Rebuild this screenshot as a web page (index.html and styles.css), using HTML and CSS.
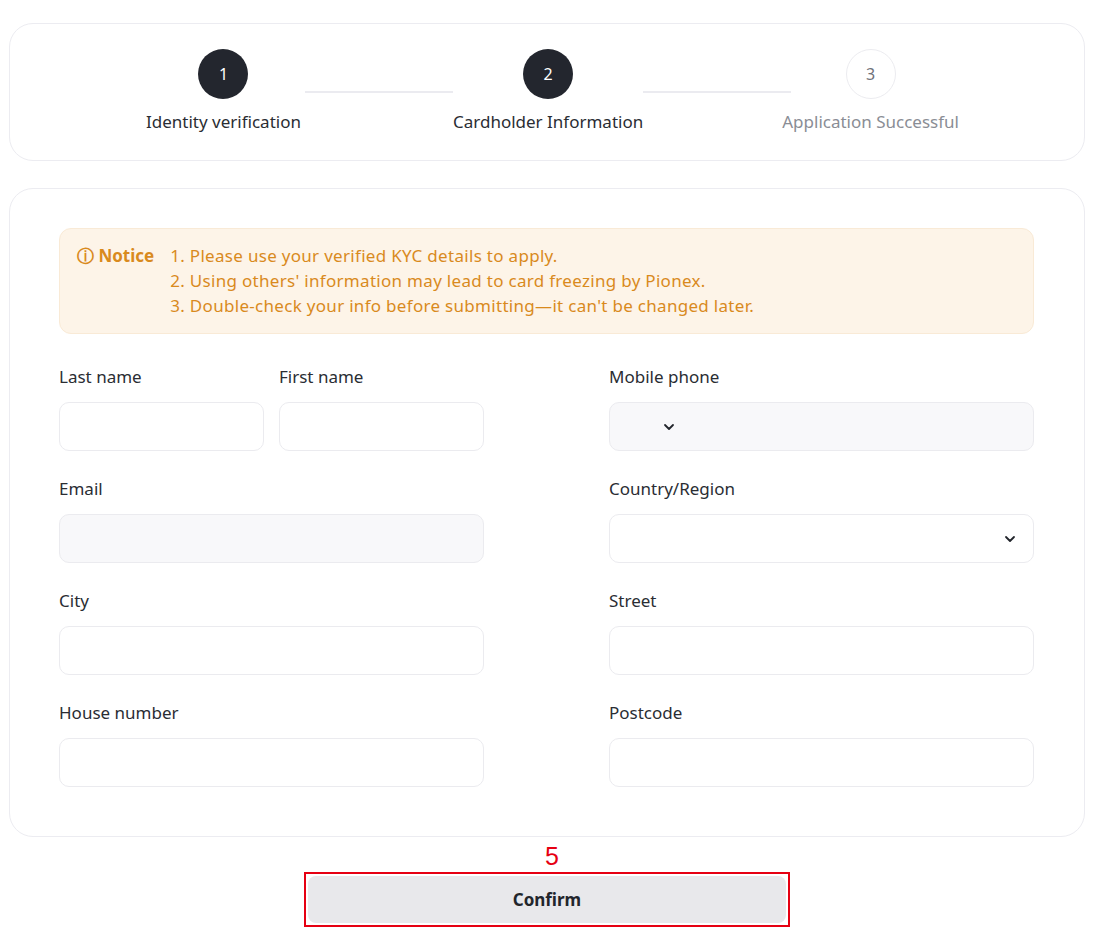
FILE: index.html
```html
<!DOCTYPE html>
<html lang="en">
<head>
  <meta charset="UTF-8" />
  <meta name="viewport" content="width=device-width, initial-scale=1.0" />
  <title>Cardholder Information</title>
  <link rel="stylesheet" href="styles.css">
</head>
<body>
  <div class="steps-card">
    <div class="steps">
      <div class="step done">
        <div class="step-dot">1</div>
        <div class="step-label">Identity verification</div>
      </div>
      <div class="step-line first"></div>
      <div class="step done">
        <div class="step-dot">2</div>
        <div class="step-label">Cardholder Information</div>
      </div>
      <div class="step-line last"></div>
      <div class="step todo">
        <div class="step-dot">3</div>
        <div class="step-label">Application Successful</div>
      </div>
    </div>
  </div>

  <div class="form-card">
    <div class="notice">
      <div class="notice-title">&#9432; Notice</div>
      <div class="notice-list">
        <div>1. Please use your verified KYC details to apply.</div>
        <div>2. Using others' information may lead to card freezing by Pionex.</div>
        <div>3. Double-check your info before submitting—it can't be changed later.</div>
      </div>
    </div>

    <div class="form-grid">
      <div class="name-pair">
        <div class="field">
          <label>Last name</label>
          <input type="text" />
        </div>
        <div class="field">
          <label>First name</label>
          <input type="text" />
        </div>
      </div>
      <div class="field">
        <label>Mobile phone</label>
        <div class="input disabled phone">
          <svg class="chev" width="14" height="14" viewBox="0 0 14 14"><path d="M3 5l4 4 4-4" fill="none" stroke="#22252b" stroke-width="1.8" stroke-linecap="round" stroke-linejoin="round"/></svg>
        </div>
      </div>

      <div class="field">
        <label>Email</label>
        <div class="input disabled"></div>
      </div>
      <div class="field">
        <label>Country/Region</label>
        <div class="input select">
          <svg class="chev" width="14" height="14" viewBox="0 0 14 14"><path d="M3 5l4 4 4-4" fill="none" stroke="#22252b" stroke-width="1.8" stroke-linecap="round" stroke-linejoin="round"/></svg>
        </div>
      </div>

      <div class="field">
        <label>City</label>
        <input type="text" />
      </div>
      <div class="field">
        <label>Street</label>
        <input type="text" />
      </div>

      <div class="field">
        <label>House number</label>
        <input type="text" />
      </div>
      <div class="field">
        <label>Postcode</label>
        <input type="text" />
      </div>
    </div>
  </div>

  <div class="footer">
    <div class="marker">5</div>
    <div class="highlight">
      <button class="confirm-btn">Confirm</button>
    </div>
  </div>
</body>
</html>
```

FILE: styles.css
```css
body {
  margin: 0;
  padding: 23px 15px 0 9px;
  font-family: 'Noto Sans', 'Open Sans', sans-serif;
  background: #fff;
  color: #2a2d33;
  box-sizing: border-box;
}

.steps-card {
  border: 1px solid #ececf1;
  border-radius: 24px;
  height: 138px;
  box-sizing: border-box;
  padding-top: 25px;
}

.steps {
  display: flex;
  justify-content: center;
  padding-left: 11px;
}

.step {
  display: flex;
  flex-direction: column;
  align-items: center;
}

.step-dot {
  width: 50px;
  height: 50px;
  border-radius: 50%;
  display: flex;
  align-items: center;
  justify-content: center;
  font-size: 16px;
  box-sizing: border-box;
}

.done .step-dot {
  background: #23262e;
  color: #fff;
}

.todo .step-dot {
  border: 1px solid #ececf0;
  color: #6f727a;
}

.step-label {
  margin-top: 11px;
  font-size: 17px;
  line-height: 24px;
  color: #2a2d33;
}

.todo .step-label {
  color: #8a8d95;
}

.step-line {
  width: 148px;
  height: 2px;
  background: #ebebf0;
  margin-top: 42px;
  align-self: flex-start;
}

.step-line.first {
  margin-left: 4px;
}

.step-line.last {
  margin-right: -9px;
}

.form-card {
  margin-top: 27px;
  border: 1px solid #ececf1;
  border-radius: 24px;
  padding: 39px 50px 49px 49px;
}

.notice {
  display: flex;
  gap: 16px;
  background: #fdf4e8;
  border: 1px solid #f9ead6;
  border-radius: 12px;
  padding: 14px 17px 15px 17px;
  color: #d98a1d;
  font-size: 17px;
  line-height: 25px;
}

.notice-title {
  font-weight: 700;
  white-space: nowrap;
}

.notice-list {
  letter-spacing: 0.3px;
}

.form-grid {
  display: grid;
  grid-template-columns: 425px 425px;
  justify-content: space-between;
  row-gap: 26px;
  margin-top: 31px;
}

.name-pair {
  display: grid;
  grid-template-columns: 1fr 1fr;
  gap: 15px;
}

.field {
  display: flex;
  flex-direction: column;
}

.field label {
  font-size: 17px;
  line-height: 24px;
  height: 24px;
  margin-bottom: 13px;
  color: #2a2d33;
}

.field input,
.input {
  height: 49px;
  box-sizing: border-box;
  border: 1px solid #ebebef;
  border-radius: 10px;
  background: #fff;
  font: inherit;
  padding: 0 14px;
  outline: none;
  width: 100%;
}

.input {
  display: flex;
  align-items: center;
}

.input.disabled {
  background: #f8f8fa;
}

.phone .chev {
  margin-left: 38px;
}

.select {
  justify-content: flex-end;
  padding-right: 16px;
}

.footer {
  display: flex;
  flex-direction: column;
  align-items: center;
}

.marker {
  color: #e60012;
  font-size: 25px;
  line-height: 30px;
  margin-top: 4px;
  font-family: 'Liberation Sans', sans-serif;
  padding-left: 10px;
}

.highlight {
  border: 2px solid #e60012;
  padding: 2px;
  width: 486px;
  height: 55px;
  box-sizing: border-box;
  margin-top: 1px;
}

.confirm-btn {
  width: 100%;
  height: 100%;
  border: none;
  border-radius: 8px;
  background: #e8e8eb;
  color: #22252b;
  font-family: inherit;
  font-size: 17px;
  font-weight: 700;
  cursor: pointer;
}
```
